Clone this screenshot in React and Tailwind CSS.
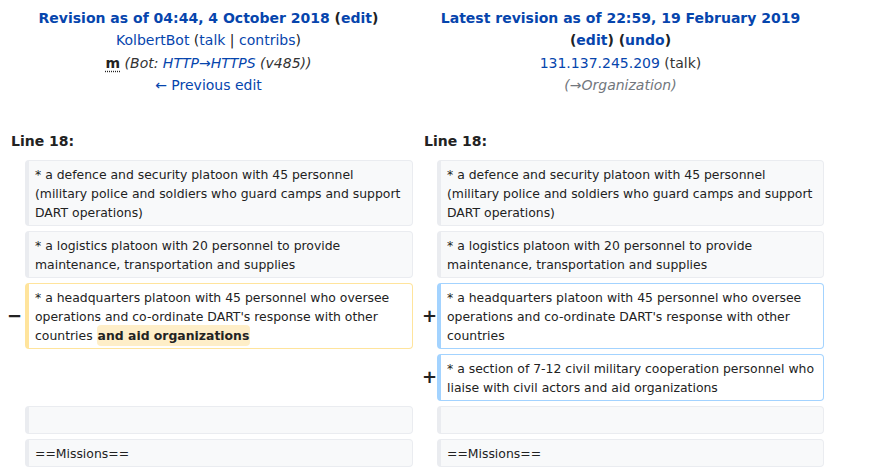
import React from "react";

const base = "border border-l-4 rounded-[4px] px-[6px] pt-[4.5px] pb-[2.5px] leading-[19px] text-[12.42px] text-[#222]";
const ctx = "bg-[#f8f9fa] border-[#eaecf0] " + base;
const del = "bg-white border-[#ffe49c] " + base;
const add = "bg-white border-[#a3d3ff] " + base;

function Marker({ ch, cls }) {
  return (
    <div className="flex items-center justify-end">
      <span className={"font-bold text-[18px] leading-none text-[#222] " + cls}>{ch}</span>
    </div>
  );
}

export default function App() {
  const link = "text-[#0645ad]";
  return (
    <div className="w-[874px] h-[472px] overflow-hidden bg-white text-[#222] font-['DejaVu_Sans',sans-serif]">
      <div className="grid grid-cols-[17px_388px_16px_387px] gap-x-[4px] pl-[4px]">
        {/* header */}
        <div className="col-span-2 text-center text-[14px] leading-[22.4px] pt-[7px]">
          <div className="font-bold">
            <span className={link}>Revision as of 04:44, 4 October 2018</span>{" "}
            (<span className={link}>edit</span>)
          </div>
          <div>
            <span className={link}>KolbertBot</span> (<span className={link}>talk</span> | <span className={link}>contribs</span>)
          </div>
          <div>
            <span className="font-bold underline decoration-dotted underline-offset-[3px]">m</span>{" "}
            <span className="italic text-[#333]">
              (Bot: <span className={link}>HTTP→HTTPS</span> (v485))
            </span>
          </div>
          <div className={link}>← Previous edit</div>
        </div>
        <div className="col-span-2 text-center text-[14px] leading-[22.4px] pt-[7px]">
          <div className="font-bold">
            <span className={link}>Latest revision as of 22:59, 19 February 2019</span>
          </div>
          <div className="font-bold">
            (<span className={link}>edit</span>) (<span className={link}>undo</span>)
          </div>
          <div>
            <span className={link}>131.137.245.209</span> <span className="text-[#333]">(talk)</span>
          </div>
          <div className="italic text-[#72777d]">(→Organization)</div>
        </div>

        {/* line numbers */}
        <div className="col-span-2 px-[7px] mt-[33px] text-[14px] leading-[22px] font-bold">Line 18:</div>
        <div className="col-span-2 px-[7px] mt-[33px] text-[14px] leading-[22px] font-bold">Line 18:</div>
      </div>

      <div className="grid grid-cols-[17px_388px_16px_387px] gap-x-[4px] gap-y-[5px] pl-[4px] mt-[8px]">
        {/* row 1 */}
        <div />
        <div className={ctx}>* a defence and security platoon with 45 personnel (military police and soldiers who guard camps and support DART operations)</div>
        <div />
        <div className={ctx}>* a defence and security platoon with 45 personnel (military police and soldiers who guard camps and support DART operations)</div>

        {/* row 2 */}
        <div />
        <div className={ctx}>* a logistics platoon with 20 personnel to provide maintenance, transportation and supplies</div>
        <div />
        <div className={ctx}>* a logistics platoon with 20 personnel to provide maintenance, transportation and supplies</div>

        {/* row 3 */}
        <Marker ch="−" cls="-mr-[1px]" />
        <div className={del}>
          * a headquarters platoon with 45 personnel who oversee operations and co-ordinate DART's response with other countries{" "}
          <span className="font-bold bg-[#feeec8] rounded-[4px] py-[3px] px-[1px]">and aid organizations</span>
        </div>
        <Marker ch="+" cls="-mr-[4px]" />
        <div className={add}>* a headquarters platoon with 45 personnel who oversee operations and co-ordinate DART's response with other countries</div>

        {/* row 4 */}
        <div />
        <div />
        <Marker ch="+" cls="-mr-[4px]" />
        <div className={add}>* a section of 7-12 civil military cooperation personnel who liaise with civil actors and aid organizations</div>

        {/* row 5 */}
        <div />
        <div className={ctx}>&nbsp;</div>
        <div />
        <div className={ctx}>&nbsp;</div>

        {/* row 6 */}
        <div />
        <div className={ctx}>==Missions==</div>
        <div />
        <div className={ctx}>==Missions==</div>
      </div>
    </div>
  );
}
